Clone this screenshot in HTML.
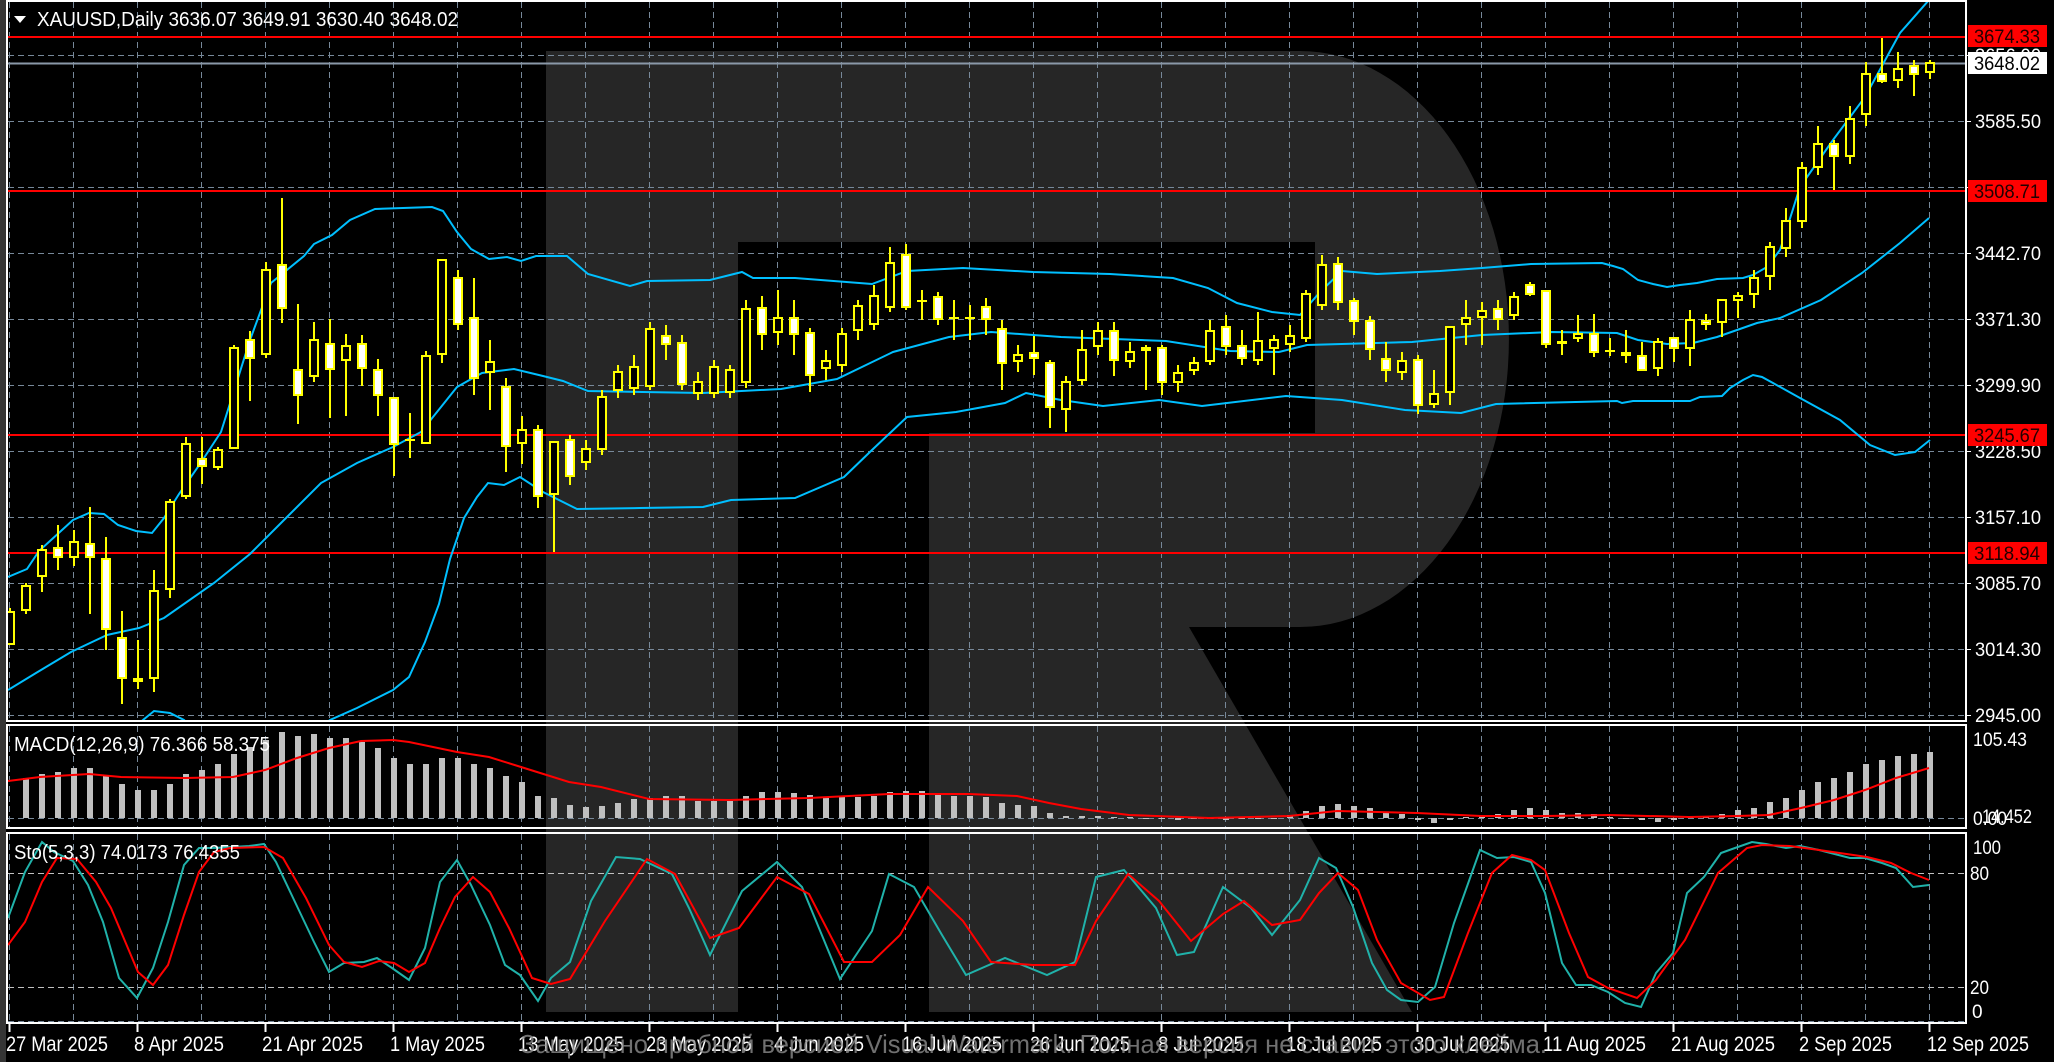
<!DOCTYPE html>
<html><head><meta charset="utf-8"><style>
html,body{margin:0;padding:0;background:#000;}
svg{display:block;}
text{font-family:"Liberation Sans","DejaVu Sans",sans-serif;}
</style></head><body>
<svg id="s" width="2054" height="1062" viewBox="0 0 2054 1062" xmlns="http://www.w3.org/2000/svg">
<defs>
<clipPath id="cm"><rect x="8" y="2" width="1957" height="718"/></clipPath>
<clipPath id="cd"><rect x="8" y="726" width="1957" height="101"/></clipPath>
<clipPath id="cs"><rect x="8" y="834" width="1957" height="188"/></clipPath>
</defs>
<rect width="2054" height="1062" fill="#000"/>
<rect x="0" y="0" width="6" height="1062" fill="#353535"/>
<!-- watermark R -->
<path d="M546,51 H1300 A209,288 0 0 1 1300,627 H1189 L1412,1012 H929 V433 H1315 V242 H738 V1012 H546 Z" fill="#262626"/>
<g id="grid"></g>
<g id="lines"></g>
<!-- panel borders -->
<g fill="none" stroke="#fff" stroke-width="2" shape-rendering="crispEdges">
<rect x="7" y="1" width="1959" height="720"/>
<rect x="7" y="725" width="1959" height="103"/>
<rect x="7" y="833" width="1959" height="190"/>
</g>
<!-- header texts -->
<polygon points="14,16 26,16 20,23" fill="#fff"/>
<text x="37" y="26" font-size="20" fill="#fff" textLength="421" lengthAdjust="spacingAndGlyphs">XAUUSD,Daily  3636.07 3649.91 3630.40 3648.02</text>
<text x="14" y="751" font-size="20" fill="#fff" textLength="256" lengthAdjust="spacingAndGlyphs">MACD(12,26,9) 76.366 58.375</text>
<text x="14" y="859" font-size="20" fill="#fff" textLength="226" lengthAdjust="spacingAndGlyphs">Sto(5,3,3) 74.0173 76.4355</text>
<!-- right axis -->
<g fill="#fff" font-size="19">
<text x="1975" y="62" textLength="66" lengthAdjust="spacingAndGlyphs">3656.90</text>
<text x="1975" y="128" textLength="66" lengthAdjust="spacingAndGlyphs">3585.50</text>
<text x="1975" y="260" textLength="66" lengthAdjust="spacingAndGlyphs">3442.70</text>
<text x="1975" y="326" textLength="66" lengthAdjust="spacingAndGlyphs">3371.30</text>
<text x="1975" y="392" textLength="66" lengthAdjust="spacingAndGlyphs">3299.90</text>
<text x="1975" y="458" textLength="66" lengthAdjust="spacingAndGlyphs">3228.50</text>
<text x="1975" y="524" textLength="66" lengthAdjust="spacingAndGlyphs">3157.10</text>
<text x="1975" y="590" textLength="66" lengthAdjust="spacingAndGlyphs">3085.70</text>
<text x="1975" y="656" textLength="66" lengthAdjust="spacingAndGlyphs">3014.30</text>
<text x="1975" y="722" textLength="66" lengthAdjust="spacingAndGlyphs">2945.00</text>
<text x="1973" y="746" textLength="54" lengthAdjust="spacingAndGlyphs">105.43</text>
<text x="1973" y="825" textLength="34" lengthAdjust="spacingAndGlyphs">0.00</text>
<text x="1982" y="823" textLength="50" lengthAdjust="spacingAndGlyphs">14.452</text>
<text x="1973" y="854" textLength="28" lengthAdjust="spacingAndGlyphs">100</text>
<text x="1970" y="880" textLength="19" lengthAdjust="spacingAndGlyphs">80</text>
<text x="1970" y="994" textLength="19" lengthAdjust="spacingAndGlyphs">20</text>
<text x="1972" y="1018">0</text>
</g>
<g shape-rendering="crispEdges">
<rect x="1968" y="52" width="79" height="22" fill="#fff"/>
<rect x="1968" y="25" width="79" height="22" fill="#f00"/>
<rect x="1968" y="180" width="79" height="22" fill="#f00"/>
<rect x="1968" y="424" width="79" height="22" fill="#f00"/>
<rect x="1968" y="542" width="79" height="22" fill="#f00"/>
</g>
<g font-size="19" fill="#000">
<text x="1974" y="70" textLength="66" lengthAdjust="spacingAndGlyphs">3648.02</text>
<text x="1974" y="43" fill="#200" textLength="66" lengthAdjust="spacingAndGlyphs">3674.33</text>
<text x="1974" y="198" fill="#200" textLength="66" lengthAdjust="spacingAndGlyphs">3508.71</text>
<text x="1974" y="442" fill="#200" textLength="66" lengthAdjust="spacingAndGlyphs">3245.67</text>
<text x="1974" y="560" fill="#200" textLength="66" lengthAdjust="spacingAndGlyphs">3118.94</text>
</g>
<!-- date labels -->
<g fill="#fff" font-size="21">
<text x="6" y="1051" textLength="102" lengthAdjust="spacingAndGlyphs">27 Mar 2025</text>
<text x="134" y="1051" textLength="90" lengthAdjust="spacingAndGlyphs">8 Apr 2025</text>
<text x="262" y="1051" textLength="101" lengthAdjust="spacingAndGlyphs">21 Apr 2025</text>
<text x="390" y="1051" textLength="95" lengthAdjust="spacingAndGlyphs">1 May 2025</text>
<text x="518" y="1051" textLength="106" lengthAdjust="spacingAndGlyphs">13 May 2025</text>
<text x="646" y="1051" textLength="106" lengthAdjust="spacingAndGlyphs">23 May 2025</text>
<text x="774" y="1051" textLength="90" lengthAdjust="spacingAndGlyphs">4 Jun 2025</text>
<text x="902" y="1051" textLength="100" lengthAdjust="spacingAndGlyphs">16 Jun 2025</text>
<text x="1030" y="1051" textLength="100" lengthAdjust="spacingAndGlyphs">26 Jun 2025</text>
<text x="1158" y="1051" textLength="86" lengthAdjust="spacingAndGlyphs">8 Jul 2025</text>
<text x="1286" y="1051" textLength="96" lengthAdjust="spacingAndGlyphs">18 Jul 2025</text>
<text x="1414" y="1051" textLength="96" lengthAdjust="spacingAndGlyphs">30 Jul 2025</text>
<text x="1543" y="1051" textLength="103" lengthAdjust="spacingAndGlyphs">11 Aug 2025</text>
<text x="1671" y="1051" textLength="104" lengthAdjust="spacingAndGlyphs">21 Aug 2025</text>
<text x="1799" y="1051" textLength="93" lengthAdjust="spacingAndGlyphs">2 Sep 2025</text>
<text x="1927" y="1051" textLength="102" lengthAdjust="spacingAndGlyphs">12 Sep 2025</text>
</g>
<text x="520" y="1053" font-size="26" fill="#8c8c8c" fill-opacity="0.8" textLength="1027" lengthAdjust="spacingAndGlyphs">Защищено пробной версией Visual Watermark. Полная версия не ставит этого клейма.</text>
</svg>
<script>
var NS="http://www.w3.org/2000/svg",S=document.getElementById('s');
function el(p,t,a){var e=document.createElementNS(NS,t);for(var k in a)e.setAttribute(k,a[k]);p.appendChild(e);return e;}
var G=document.getElementById('grid'),L=document.getElementById('lines');
var gc="#778899",dash="6,4";
// vertical grid
for(var k=0;k<=30;k++){var x=9+64*k+0.5;
 el(G,'line',{x1:x,y1:2,x2:x,y2:720,stroke:gc,'stroke-dasharray':dash,'shape-rendering':'crispEdges'});
 el(G,'line',{x1:x,y1:726,x2:x,y2:827,stroke:gc,'stroke-dasharray':dash,'shape-rendering':'crispEdges'});
 el(G,'line',{x1:x,y1:834,x2:x,y2:1022,stroke:gc,'stroke-dasharray':dash,'shape-rendering':'crispEdges'});
}
for(var k=0;k<=10;k++){var y=55+66*k+0.5;
 el(G,'line',{x1:8,y1:y,x2:1965,y2:y,stroke:gc,'stroke-dasharray':dash,'shape-rendering':'crispEdges'});
 el(G,'line',{x1:1966,y1:y,x2:1971,y2:y,stroke:'#fff','shape-rendering':'crispEdges'});
}
[[818.5,gc],[873.5,'#c0c0c0'],[987.5,'#c0c0c0'],[1021.5,gc]].forEach(function(a){
 el(G,'line',{x1:8,y1:a[0],x2:1965,y2:a[0],stroke:a[1],'stroke-dasharray':dash,'shape-rendering':'crispEdges'});});
// date ticks
for(var k=0;k<16;k++){var x=9+128*k+0.5;el(G,'line',{x1:x,y1:1023,x2:x,y2:1032,stroke:'#fff','stroke-width':2});}
// price lines
el(G,'line',{x1:8,y1:63.5,x2:1965,y2:63.5,stroke:'#8a98a8','stroke-width':2});
[37,191,435,553].forEach(function(y){el(G,'line',{x1:8,y1:y,x2:1965,y2:y,stroke:'#f00','stroke-width':2});});
function pl(pts,col,clip,w){el(L,'polyline',{points:pts.map(function(p){return p.join(',')}).join(' '),fill:'none',stroke:col,'stroke-width':w||2,'clip-path':'url(#'+clip+')'});}
// Bollinger
var up=[[8,577],[27,569],[39,551],[73,520],[89,513],[104,514],[118,525],[136,531],[152,533],[164,518],[179,494],[200,464],[221,432],[250,340],[271,283],[304,256],[314,244],[332,235],[350,220],[375,209],[432,207],[443,211],[457,232],[471,249],[489,259],[507,257],[521,261],[536,256],[567,256],[588,274],[630,286],[647,281],[710,280],[742,272],[753,278],[795,278],[872,284],[907,271],[963,268],[1033,272],[1110,274],[1173,278],[1208,288],[1237,303],[1272,312],[1300,315],[1321,291],[1342,271],[1377,274],[1440,271],[1482,268],[1531,264],[1602,263],[1613,266],[1623,269],[1638,280],[1653,284],[1667,287],[1680,285],[1697,283],[1717,279],[1743,278],[1753,275],[1767,267],[1780,250],[1800,187],[1833,140],[1865,97],[1900,33],[1929,0]];
var md=[[8,690],[36,673],[71,652],[107,635],[139,628],[164,618],[214,583],[250,554],[286,518],[321,483],[357,463],[393,447],[421,432],[457,387],[482,373],[514,369],[543,376],[563,381],[588,391],[703,393],[781,389],[837,379],[893,352],[949,337],[991,332],[1061,337],[1166,341],[1230,351],[1279,352],[1307,345],[1412,342],[1482,335],[1552,332],[1617,333],[1638,340],[1667,344],[1693,343],[1717,337],[1737,330],[1757,323],[1780,318],[1821,300],[1862,273],[1900,243],[1929,218]];
var lo=[[120,740],[143,720],[154,711],[170,713],[184,720],[200,735],[310,735],[330,720],[357,708],[393,690],[409,677],[425,642],[439,604],[450,559],[464,518],[477,497],[488,483],[504,485],[520,477],[543,492],[577,509],[640,508],[703,507],[731,500],[795,498],[844,477],[872,450],[907,417],[956,412],[1005,403],[1026,393],[1061,400],[1103,406],[1159,400],[1202,406],[1286,396],[1342,400],[1405,410],[1461,413],[1496,404],[1617,401],[1622,403],[1633,401],[1690,401],[1700,397],[1722,396],[1730,388],[1743,380],[1753,375],[1762,377],[1773,383],[1800,398],[1840,420],[1870,445],[1895,455],[1915,452],[1930,440]];
pl(up,'#00bfff','cm');pl(md,'#00bfff','cm');pl(lo,'#00bfff','cm');
// candles
var C=[[611,645,608,645,0],[585,611,583,614,0],[549,577,545,592,0],[547,558,525,570,1],[541,558,530,566,0],[543,558,507,614,1],[558,630,537,650,1],[637,679,611,704,1],[678,682,640,689,1],[590,679,570,692,0],
[501,590,499,598,0],[443,497,437,499,0],[458,467,437,484,1],[449,468,447,470,0],[347,449,345,449,0],[339,359,331,401,1],[269,355,262,358,0],[264,309,198,323,1],[369,396,304,424,1],[339,377,322,382,0],
[343,370,319,418,1],[345,361,334,416,0],[343,369,335,386,1],[369,396,359,416,1],[397,445,397,476,1],[439,441,413,458,0],[355,444,351,444,0],[259,355,259,363,0],[277,325,270,330,1],[317,379,278,395,1],
[361,373,340,410,0],[386,447,378,472,1],[429,444,416,464,0],[429,497,425,508,1],[441,495,441,552,0],[439,477,435,485,1],[448,463,440,470,0],[396,450,390,455,0],[371,391,365,398,0],[366,389,355,395,0],
[328,387,322,390,0],[335,345,325,360,1],[342,385,335,390,1],[381,394,372,400,0],[366,394,360,398,0],[369,393,365,398,0],[308,383,300,388,0],[307,335,296,350,1],[317,333,290,345,0],[317,335,300,355,1],
[332,376,328,392,1],[360,369,350,380,0],[333,366,328,372,0],[305,331,300,340,0],[295,325,285,330,0],[262,308,247,312,0],[254,308,244,310,1],[300,302,290,320,0],[296,320,292,325,1],[317,319,300,340,0],
[317,319,305,340,0],[306,320,298,335,1],[328,364,320,390,1],[354,362,345,372,0],[352,359,336,375,1],[362,408,360,428,1],[381,410,376,432,0],[349,381,330,385,0],[330,347,322,355,0],[330,361,322,376,1],
[351,362,342,368,0],[347,351,345,390,0],[347,383,345,395,1],[372,383,365,392,0],[362,371,357,375,0],[330,362,320,365,0],[326,347,315,355,1],[345,359,330,365,1],[340,361,312,365,0],[339,349,335,375,0],
[335,345,325,352,0],[293,339,290,342,0],[264,306,255,310,0],[263,303,257,310,1],[300,322,298,335,1],[320,350,316,360,1],[358,371,342,382,1],[360,373,352,380,0],[359,406,355,414,1],[393,405,370,408,0],
[326,393,326,405,0],[317,325,300,345,0],[310,318,302,345,0],[308,320,300,330,1],[296,316,292,320,0],[284,295,282,296,1],[290,345,290,348,1],[341,344,330,355,1],[333,339,315,342,0],[333,353,314,357,1],
[350,352,338,356,0],[352,356,330,363,1],[355,371,342,371,1],[341,369,338,376,0],[337,349,337,362,1],[319,349,310,366,0],[320,325,314,330,1],[299,323,299,337,0],[295,301,292,318,0],[277,295,270,308,0],
[246,277,242,290,0],[220,249,208,257,0],[167,222,162,228,0],[143,168,126,175,0],[143,157,140,190,1],[118,157,106,164,0],[73,115,62,126,0],[73,82,38,83,1],[68,81,52,88,0],[65,75,60,96,1],[62,73,60,79,0]];
var CG=el(L,'g',{'clip-path':'url(#cm)','shape-rendering':'crispEdges'});
C.forEach(function(c,i){var x=9+16*i;
 el(CG,'rect',{x:x,y:c[2],width:2,height:Math.max(1,c[3]-c[2]),fill:'#ff0'});
 var h=Math.max(2,c[1]-c[0]);
 el(CG,'rect',{x:x-4,y:c[0],width:10,height:h,fill:'#ff0'});
 if(h>4) el(CG,'rect',{x:x-2,y:c[0]+2,width:6,height:h-4,fill:c[4]?'#fff':'#000'});
});
// MACD
var M=[781,778,774,772,768,768,775,784,790,790,784,774,770,764,754,747,740,732,736,734,738,738,742,748,758,764,764,758,758,764,768,776,782,796,798,805,807,806,803,799,798,796,796,801,801,801,796,792,792,793,795,797,797,797,796,792,791,791,794,796,796,797,803,805,806,813,816,816,816,817,817,818,819,820,819,819,820,819,819,818,815,811,806,804,806,808,812,814,820,823,820,817,816,814,810,808,810,813,813,814,817,819,820,822,820,817,817,814,810,808,802,798,790,782,778,772,764,760,756,754,752];
var MG=el(L,'g',{'clip-path':'url(#cd)','shape-rendering':'crispEdges'});
M.forEach(function(t,i){if(i==0)return;var x=9+16*i-2;var y0=Math.min(t,818),y1=Math.max(t,818);
 el(MG,'rect',{x:x,y:y0,width:6,height:Math.max(1,y1-y0),fill:'#c0c0c0'});});
pl([[8,781],[40,777],[89,774],[121,777],[185,778],[233,777],[265,770],[297,758],[329,748],[361,741],[393,740],[409,742],[457,752],[489,757],[521,767],[569,782],[601,787],[649,799],[729,800],[809,798],[889,794],[969,794],[1017,796],[1049,803],[1081,809],[1129,815],[1209,818],[1289,816],[1337,811],[1417,813],[1481,816],[1545,816],[1609,815],[1689,817],[1737,816],[1769,815],[1801,808],[1834,800],[1865,790],[1896,778],[1929,768]],'#f00','cd');
// Stochastic
var K=[[8,918],[25,872],[42,842],[54,852],[73,861],[88,885],[103,922],[119,978],[137,998],[153,968],[168,922],[184,865],[199,848],[214,848],[249,846],[264,844],[276,862],[295,902],[314,942],[329,972],[344,963],[364,962],[377,958],[392,968],[409,980],[425,948],[440,882],[457,860],[471,885],[490,925],[505,965],[520,975],[538,1001],[551,978],[570,962],[591,901],[616,857],[640,859],[672,874],[689,908],[710,955],[742,891],[777,862],[802,887],[840,979],[872,931],[889,874],[914,887],[942,935],[966,975],[1005,958],[1047,975],[1075,962],[1096,877],[1124,870],[1156,908],[1177,955],[1194,952],[1223,887],[1251,908],[1272,935],[1300,900],[1319,858],[1336,868],[1353,907],[1372,963],[1387,990],[1401,1000],[1418,1002],[1435,987],[1454,923],[1480,850],[1497,858],[1514,857],[1531,862],[1545,893],[1562,963],[1576,985],[1591,985],[1608,992],[1625,1003],[1641,1007],[1656,973],[1673,953],[1687,893],[1704,877],[1721,853],[1735,848],[1752,842],[1766,844],[1786,848],[1800,846],[1819,850],[1850,858],[1865,858],[1882,863],[1896,868],[1913,887],[1929,885]];
var D=[[8,945],[25,922],[42,882],[57,858],[77,859],[96,882],[111,908],[138,972],[153,985],[168,965],[184,915],[199,872],[214,852],[230,848],[264,847],[283,858],[306,898],[329,945],[344,962],[362,967],[379,961],[394,963],[409,972],[425,963],[440,928],[455,897],[473,877],[490,892],[509,928],[532,978],[551,984],[570,979],[605,921],[647,859],[675,874],[710,938],[739,928],[777,877],[809,894],[844,962],[872,962],[900,935],[928,887],[963,921],[991,962],[1033,965],[1075,965],[1096,921],[1128,874],[1159,901],[1191,941],[1223,914],[1244,901],[1272,925],[1300,920],[1319,893],[1338,873],[1358,890],[1377,940],[1401,983],[1430,1000],[1444,997],[1468,933],[1492,873],[1512,855],[1531,860],[1545,870],[1569,933],[1588,977],[1608,988],[1637,998],[1656,980],[1685,940],[1718,873],[1747,848],[1762,845],[1790,846],[1819,850],[1867,857],[1891,863],[1911,873],[1929,880]];
pl(K,'#20b2aa','cs');pl(D,'#f00','cs');
</script>
</body></html>
